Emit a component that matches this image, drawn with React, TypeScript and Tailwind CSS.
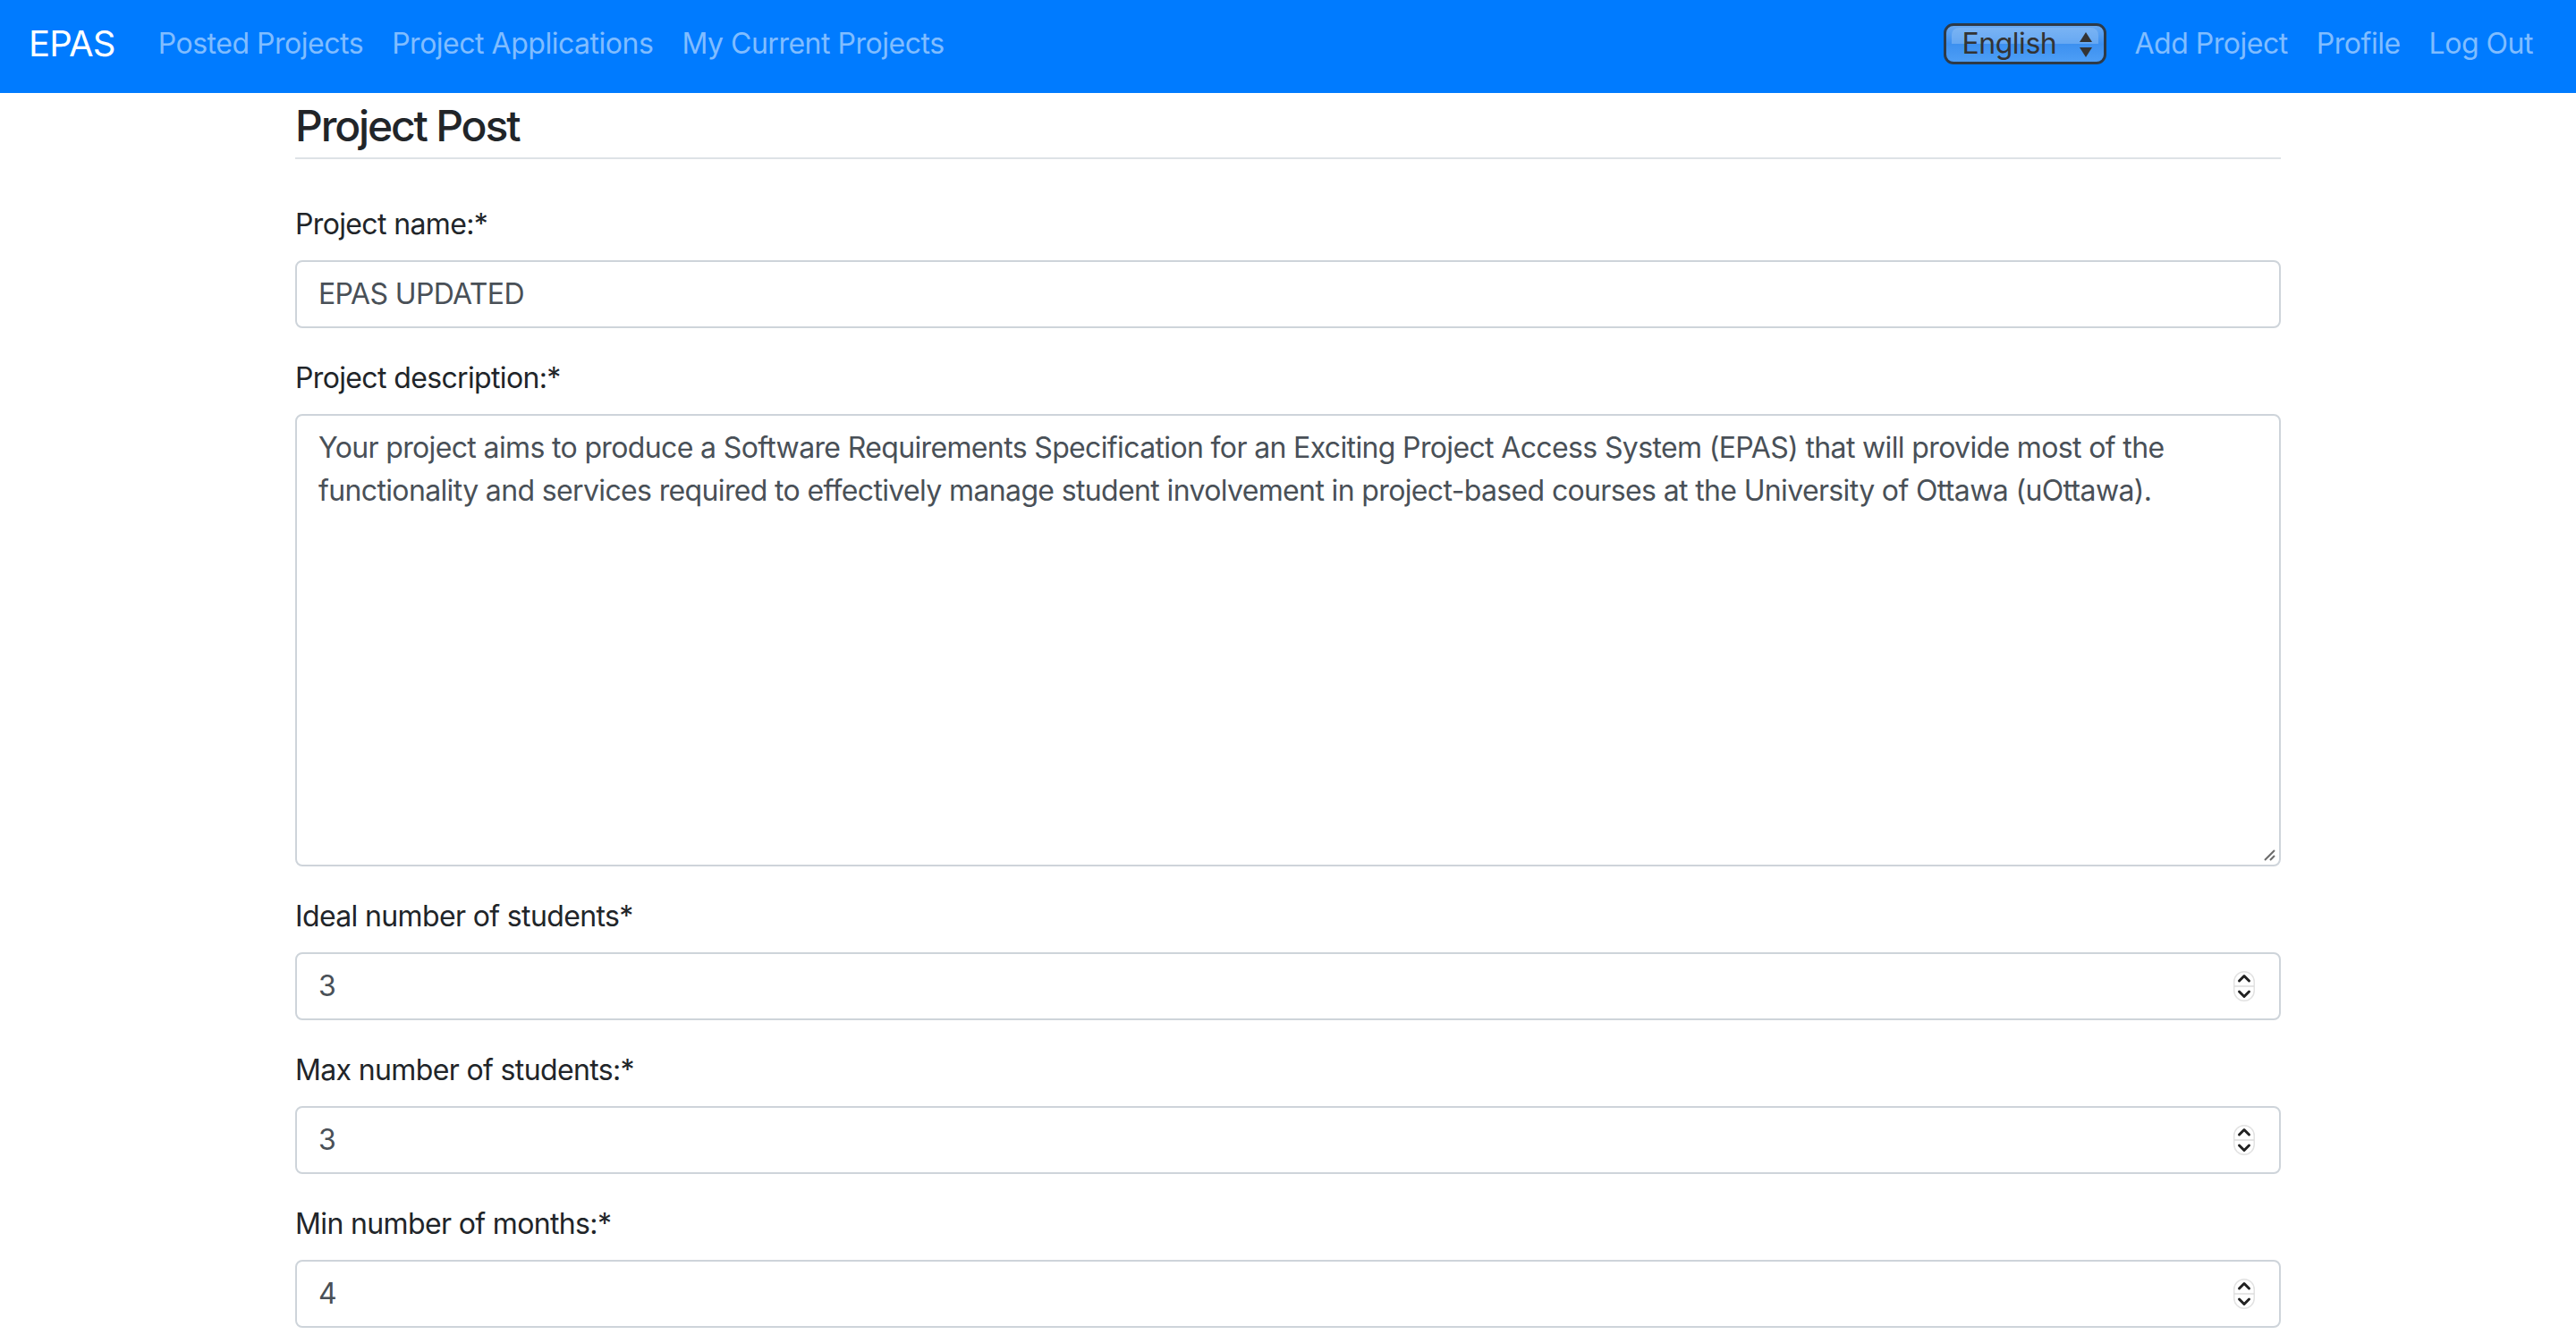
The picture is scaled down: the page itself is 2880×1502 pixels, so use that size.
const font = { fontFamily: 'Inter, "Helvetica Neue", Arial, sans-serif' };

function NavLink({ label }: { label: string }) {
  return <a className="px-[16px] text-[32px] leading-[48px] tracking-[-0.015em] text-[#80bdff]">{label}</a>;
}

function LangSelect() {
  return (
    <div className="relative mr-[16px] flex h-[46px] w-[182px] items-center overflow-hidden rounded-[11px] border-[3px] border-[#2d3a48] bg-gradient-to-b from-[#6aaaf2] via-[#3c90f0] to-[#4d9ef6]">
      <div className="absolute inset-x-[6px] top-[2px] h-[18px] rounded-t-[8px] bg-[#8ebff5]/50" />
      <span className="relative pl-[18px] text-[32px] leading-[40px] tracking-[-0.015em] text-[#333]">English</span>
      <svg className="absolute right-[12px] top-[6px]" width="16" height="30" viewBox="0 0 16 30">
        <polygon points="8,1 15,12 1,12" fill="#333" />
        <polygon points="1,18 15,18 8,29" fill="#333" />
      </svg>
    </div>
  );
}

function Spinner() {
  return (
    <svg width="24" height="34" viewBox="0 0 24 34">
      <rect x="0.75" y="0.75" width="22.5" height="32.5" rx="11.25" fill="#fff" stroke="#e2e2e2" strokeWidth="1.5" />
      <line x1="1" y1="17" x2="23" y2="17" stroke="#dcdcdc" strokeWidth="1.5" />
      <polyline points="6.5,11 12,5.5 17.5,11" fill="none" stroke="#222" strokeWidth="3" strokeLinecap="round" strokeLinejoin="round" />
      <polyline points="6.5,23 12,28.5 17.5,23" fill="none" stroke="#222" strokeWidth="3" strokeLinecap="round" strokeLinejoin="round" />
    </svg>
  );
}

function Field({ label, value, number }: { label: string; value: string; number?: boolean }) {
  return (
    <div className="mb-[32px]">
      <div className="mb-[16px] text-[32px] leading-[48px] tracking-[-0.02em] text-[#212529]">{label}</div>
      <div className="flex h-[76px] items-center justify-between rounded-[8px] border-2 border-[#ced4da] bg-white pl-[24px] pr-[27px]">
        <span className="text-[32px] leading-[48px] tracking-[-0.02em] text-[#495057]">{value}</span>
        {number && <Spinner />}
      </div>
    </div>
  );
}

export default function App() {
  return (
    <div className="min-h-screen bg-white" style={font}>
      <nav className="flex h-[104px] items-center bg-[#007bff] px-[32px] pb-[6px]">
        <a className="mr-[32px] text-[40px] leading-[60px] tracking-[-0.02em] text-white">EPAS</a>
        <NavLink label="Posted Projects" />
        <NavLink label="Project Applications" />
        <NavLink label="My Current Projects" />
        <div className="ml-auto flex items-center">
          <LangSelect />
          <NavLink label="Add Project" />
          <NavLink label="Profile" />
          <NavLink label="Log Out" />
        </div>
      </nav>

      <div className="mx-auto w-[2220px]">
        <h4 className="mt-[8px] border-b-2 border-[#dee2e6] pb-[6px] text-[48px] font-medium leading-[58px] tracking-[-0.045em] text-[#212529]">
          Project Post
        </h4>

        <div className="mt-[49px]">
          <Field label="Project name:*" value="EPAS UPDATED" />

          <div className="mb-[32px]">
            <div className="mb-[16px] text-[32px] leading-[48px] tracking-[-0.02em] text-[#212529]">Project description:*</div>
            <div className="relative h-[506px] rounded-[8px] border-2 border-[#ced4da] bg-white px-[24px] py-[12px] text-[32px] leading-[48px] tracking-[-0.02em] text-[#495057]">
              Your project aims to produce a Software Requirements Specification for an Exciting Project Access System (EPAS) that will provide most of the functionality and services required to effectively manage student involvement in project-based courses at the University of Ottawa (uOttawa).
              <svg className="absolute bottom-[3px] right-[3px]" width="16" height="16" viewBox="0 0 16 16">
                <line x1="3" y1="14" x2="14" y2="3" stroke="#6b6b6b" strokeWidth="2" />
                <line x1="9" y1="14" x2="14" y2="9" stroke="#6b6b6b" strokeWidth="2" />
              </svg>
            </div>
          </div>

          <Field label="Ideal number of students*" value="3" number />
          <Field label="Max number of students:*" value="3" number />
          <Field label="Min number of months:*" value="4" number />
        </div>
      </div>
    </div>
  );
}
